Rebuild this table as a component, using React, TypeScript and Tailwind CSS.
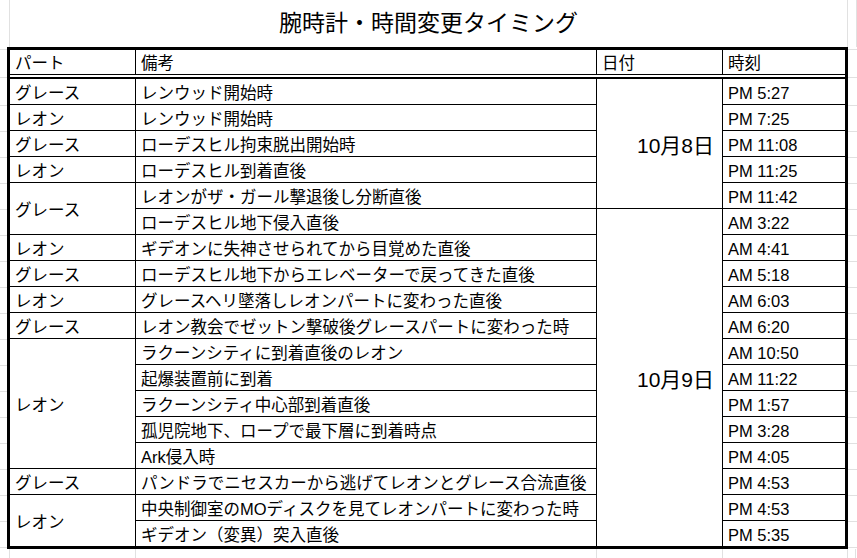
type Row = { part?: string; partSpan?: number; memo: string; date?: string; dateSpan?: number; time: string };

const rows: Row[] = [
  { part: "グレース", memo: "レンウッド開始時", date: "10月8日", dateSpan: 5, time: "PM 5:27" },
  { part: "レオン", memo: "レンウッド開始時", time: "PM 7:25" },
  { part: "グレース", memo: "ローデスヒル拘束脱出開始時", time: "PM 11:08" },
  { part: "レオン", memo: "ローデスヒル到着直後", time: "PM 11:25" },
  { part: "グレース", partSpan: 2, memo: "レオンがザ・ガール撃退後し分断直後", time: "PM 11:42" },
  { memo: "ローデスヒル地下侵入直後", date: "10月9日", dateSpan: 13, time: "AM 3:22" },
  { part: "レオン", memo: "ギデオンに失神させられてから目覚めた直後", time: "AM 4:41" },
  { part: "グレース", memo: "ローデスヒル地下からエレベーターで戻ってきた直後", time: "AM 5:18" },
  { part: "レオン", memo: "グレースヘリ墜落しレオンパートに変わった直後", time: "AM 6:03" },
  { part: "グレース", memo: "レオン教会でゼットン撃破後グレースパートに変わった時", time: "AM 6:20" },
  { part: "レオン", partSpan: 5, memo: "ラクーンシティに到着直後のレオン", time: "AM 10:50" },
  { memo: "起爆装置前に到着", time: "AM 11:22" },
  { memo: "ラクーンシティ中心部到着直後", time: "PM 1:57" },
  { memo: "孤児院地下、ロープで最下層に到着時点", time: "PM 3:28" },
  { memo: "Ark侵入時", time: "PM 4:05" },
  { part: "グレース", memo: "パンドラでニセスカーから逃げてレオンとグレース合流直後", time: "PM 4:53" },
  { part: "レオン", partSpan: 2, memo: "中央制御室のMOディスクを見てレオンパートに変わった時", time: "PM 4:53" },
  { memo: "ギデオン（変異）突入直後", time: "PM 5:35" },
];

const spanClass: Record<number, string> = {
  1: "",
  2: "row-span-2",
  5: "row-span-5",
  13: "row-span-13",
};

const cell = "bg-white flex items-center pl-[5px] pt-[3px] whitespace-nowrap";

function Margin() {
  return (
    <div className="flex flex-col">
      <div className="h-[2px] border-b border-[#e1e1e1] box-content" />
      <div className="h-[27px] border-b border-[#e1e1e1] box-content" />
      <div className="h-[27px] border-b border-[#e1e1e1] box-content" />
      {Array.from({ length: 17 }).map((_, i) => (
        <div key={i} className="h-[25px] border-b border-[#e1e1e1] box-content" />
      ))}
    </div>
  );
}

export default function App() {
  return (
    <div
      className="w-[857px] h-[558px] bg-white overflow-hidden text-black text-[16.5px] leading-none"
      style={{ fontFamily: '"Liberation Sans", "Noto Sans CJK JP", sans-serif' }}
    >
      {/* title */}
      <div className="h-[47px] pl-[9px] flex">
        <div className="w-[839px] border-x border-[#e1e1e1] flex items-center justify-center text-[23px] pb-px">
          腕時計・時間変更タイミング
        </div>
        <div className="w-[9px] border-r border-[#e1e1e1]" />
      </div>

      <div className="flex">
        <div className="w-[7px]">
          <Margin />
        </div>

        {/* sheet */}
        <div className="w-[841px] border-[3px] border-black">
          <div className="grid grid-cols-[125px_460px_125px_122px] gap-px bg-black h-[24px]">
            <div className={cell}>パート</div>
            <div className={cell}>備考</div>
            <div className={cell}>日付</div>
            <div className={cell}>時刻</div>
          </div>
          <div className="h-px bg-black" />
          <div className="h-[2px] bg-white" />
          <div className="h-[2px] bg-black" />
          <div className="grid grid-cols-[125px_460px_125px_122px] auto-rows-[25px] gap-px bg-black">
            {rows.map((r, i) => [
              r.part ? (
                <div key={`p${i}`} className={`${cell} col-start-1 ${spanClass[r.partSpan ?? 1]}`}>
                  {r.part}
                </div>
              ) : null,
              <div key={`m${i}`} className={`${cell} col-start-2`}>
                {r.memo}
              </div>,
              r.date ? (
                <div
                  key={`d${i}`}
                  className={`bg-white flex items-center justify-end pr-[8px] pt-[3px] text-[21px] col-start-3 ${spanClass[r.dateSpan ?? 1]}`}
                >
                  {r.date}
                </div>
              ) : null,
              <div key={`t${i}`} className={`${cell} col-start-4`}>
                {r.time}
              </div>,
            ])}
          </div>
        </div>

        <div className="w-[9px]">
          <Margin />
        </div>
      </div>

      {/* gridlines below the sheet */}
      <div className="flex h-[9px] pl-[9px]">
        <div className="w-[126px] border-l border-[#e1e1e1]" />
        <div className="w-[461px] border-l border-[#e1e1e1]" />
        <div className="w-[126px] border-l border-[#e1e1e1]" />
        <div className="w-[125px] border-l border-[#e1e1e1]" />
        <div className="w-[9px] border-x border-[#e1e1e1]" />
      </div>
    </div>
  );
}
